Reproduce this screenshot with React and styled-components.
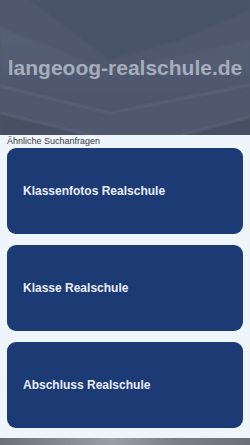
import React from "react";
import styled, { createGlobalStyle } from "styled-components";

const GlobalStyle = createGlobalStyle`
  html, body {
    margin: 0;
    padding: 0;
    background: #eef6fc;
    font-family: "Liberation Sans", Arial, sans-serif;
  }
`;

const Page = styled.div`
  width: 250px;
  min-height: 445px;
  display: flex;
  flex-direction: column;
  background: #eef6fc;
`;

const Header = styled.header`
  position: relative;
  height: 135px;
  background: #4f586c;
  display: flex;
  align-items: center;
  justify-content: center;
  overflow: hidden;
`;

const Backdrop = styled.svg`
  position: absolute;
  inset: 0;
`;

const Title = styled.h1`
  position: relative;
  margin: 0;
  font-size: 21px;
  font-weight: bold;
  color: #a7adbb;
  white-space: nowrap;
`;

const Content = styled.main`
  flex: 1;
  padding: 0 7px 10px 7px;
  display: flex;
  flex-direction: column;
`;

const Caption = styled.div`
  font-size: 9px;
  color: #3a3a3a;
  line-height: 12px;
  padding-bottom: 1px;
`;

const List = styled.div`
  display: flex;
  flex-direction: column;
  gap: 11px;
`;

const Card = styled.a`
  height: 86px;
  border-radius: 9px;
  background: #1c3a73;
  color: #e8eefa;
  display: flex;
  align-items: center;
  padding: 0 16px;
  font-size: 12px;
  font-weight: bold;
  text-decoration: none;
`;

const Footer = styled.footer`
  height: 7px;
  background: linear-gradient(90deg, #6b7079 0%, #9a9ea6 45%, #7a7f88 70%, #6b7079 100%);
`;

const items = ["Klassenfotos Realschule", "Klasse Realschule", "Abschluss Realschule"];

export default function App() {
  return (
    <>
      <GlobalStyle />
      <Page>
        <Header>
          <Backdrop width="250" height="135" viewBox="0 0 250 135">
            <defs>
              <linearGradient id="shade" x1="0" y1="0" x2="0" y2="1">
                <stop offset="0" stopColor="#566076" />
                <stop offset="1" stopColor="#4c5569" />
              </linearGradient>
              <filter id="soft">
                <feGaussianBlur stdDeviation="1.2" />
              </filter>
            </defs>
            <polygon points="30,0 250,0 250,10 180,40 110,60" fill="#4a5367" filter="url(#soft)" />
            <polygon points="0,27 110,70 250,40 250,85 110,113 0,86" fill="url(#shade)" filter="url(#soft)" />
            <polyline points="0,86 110,113 250,85" fill="none" stroke="#66708a" strokeWidth="2" opacity="0.6" filter="url(#soft)" />
            <polygon points="0,113 90,135 0,135" fill="#474f62" filter="url(#soft)" />
            <polygon points="250,117 180,135 250,135" fill="#474f62" filter="url(#soft)" />
            <polyline points="0,113 90,135" fill="none" stroke="#6a7490" strokeWidth="2" opacity="0.5" filter="url(#soft)" />
            <polyline points="250,117 180,135" fill="none" stroke="#6a7490" strokeWidth="2" opacity="0.5" filter="url(#soft)" />
          </Backdrop>
          <Title>langeoog-realschule.de</Title>
        </Header>
        <Content>
          <Caption>Ähnliche Suchanfragen</Caption>
          <List>
            {items.map(item => (
              <Card key={item} href="#">{item}</Card>
            ))}
          </List>
        </Content>
        <Footer />
      </Page>
    </>
  );
}
